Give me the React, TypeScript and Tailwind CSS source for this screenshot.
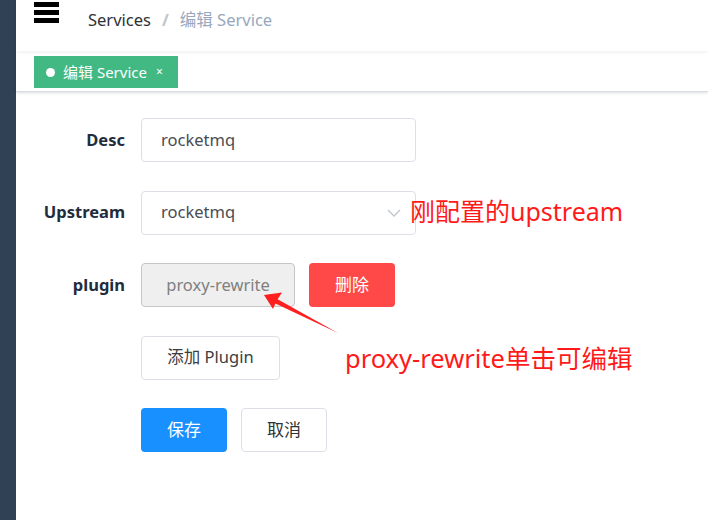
import React from "react";

const font = { fontFamily: '"Noto Sans", "Noto Sans CJK SC", sans-serif' };

export default function App() {
  return (
    <div
      className="relative flex h-[520px] w-[708px] overflow-hidden bg-white"
      style={font}
    >
      <div className="w-[16px] shrink-0 bg-[#304156]" />
      <div className="flex min-w-0 flex-1 flex-col">
        {/* navbar */}
        <div className="relative z-20 flex h-[51px] shrink-0 items-start bg-white shadow-[0_1px_4px_rgba(0,21,41,0.08)]">
          <div className="ml-[18px] mt-[2px] flex w-[25px] flex-col gap-[3px]">
            <div className="h-[5px] bg-black" />
            <div className="h-[5px] bg-black" />
            <div className="h-[5px] bg-black" />
          </div>
          <div className="ml-[29px] mt-[7px] flex items-center text-[16.5px] leading-[26px]">
            <span className="text-[#303133]">Services</span>
            <span className="mx-[11px] font-bold text-[#c0c4cc]">/</span>
            <span className="text-[#97a8be]">编辑 Service</span>
          </div>
        </div>
        {/* tags view */}
        <div className="relative z-10 flex h-[41px] shrink-0 items-start border-b border-[#d8dce5] bg-white shadow-[0_1px_3px_0_rgba(0,0,0,0.12),0_0_3px_0_rgba(0,0,0,0.04)]">
          <div className="ml-[18px] mt-[5px] flex h-[32px] w-[144px] items-center bg-[#42b983] pl-[12px] text-[15px] text-white">
            <span className="mr-[8px] h-[9px] w-[9px] rounded-full bg-white" />
            <span className="leading-none">编辑 Service</span>
            <span className="ml-[9px] text-[12px] leading-none">×</span>
          </div>
        </div>
        {/* form */}
        <div className="flex flex-col gap-[28.5px] pt-[26px] text-[16.5px]">
          <div className="flex h-[44px] items-center">
            <div className="w-[109px] text-right font-bold text-[#1f2d3d]">Desc</div>
            <div className="ml-[16px] flex h-[44px] w-[275px] items-center rounded-[4px] border border-[#dcdfe6] pl-[19px] text-[#494c52]">
              rocketmq
            </div>
          </div>
          <div className="flex h-[44px] items-center">
            <div className="w-[109px] text-right font-bold text-[#1f2d3d]">Upstream</div>
            <div className="ml-[16px] flex h-[44px] w-[275px] items-center justify-between rounded-[4px] border border-[#dcdfe6] pl-[19px] pr-[14px] text-[#494c52]">
              <span>rocketmq</span>
              <svg width="14" height="8" viewBox="0 0 14 8" fill="none">
                <path d="M1 1l6 6 6-6" stroke="#c0c4cc" strokeWidth="1.3" />
              </svg>
            </div>
          </div>
          <div className="flex h-[44px] items-center">
            <div className="w-[109px] text-right font-bold text-[#1f2d3d]">plugin</div>
            <div className="ml-[16px] flex h-[44px] w-[154px] items-center justify-center rounded-[4px] border border-[#c6c6c6] bg-[#efefef] text-[#808080]">
              proxy-rewrite
            </div>
            <div className="ml-[14px] flex h-[44px] w-[86px] items-center justify-center rounded-[4px] bg-[#ff4949] text-[17px] text-white">
              删除
            </div>
          </div>
          <div className="flex h-[44px] items-center">
            <div className="w-[109px]" />
            <div className="ml-[16px] flex h-[44px] w-[139px] items-center justify-center rounded-[4px] border border-[#dcdfe6] text-[#3a3d42]">
              添加 Plugin
            </div>
          </div>
          <div className="flex h-[44px] items-center">
            <div className="w-[109px]" />
            <div className="ml-[16px] flex h-[44px] w-[86px] items-center justify-center rounded-[4px] bg-[#1890ff] text-[17px] text-white">
              保存
            </div>
            <div className="ml-[14px] flex h-[44px] w-[86px] items-center justify-center rounded-[4px] border border-[#dcdfe6] text-[17px] text-[#303133]">
              取消
            </div>
          </div>
        </div>
      </div>

      {/* annotations */}
      <div className="absolute left-[410px] top-[194px] text-[25px] leading-[34px] text-[#ff1a1a]">
        刚配置的upstream
      </div>
      <div className="absolute left-[345px] top-[340px] text-[25.5px] leading-[36px] text-[#ff1a1a]">
        proxy-rewrite单击可编辑
      </div>
      <svg
        className="absolute left-[260px] top-[285px]"
        width="85"
        height="55"
        viewBox="0 0 85 55"
      >
        <polygon
          points="4,10 22,7.5 17.6,14.2 78,48 15.4,18.6 13,24"
          fill="#ff1f1f"
        />
      </svg>
    </div>
  );
}
